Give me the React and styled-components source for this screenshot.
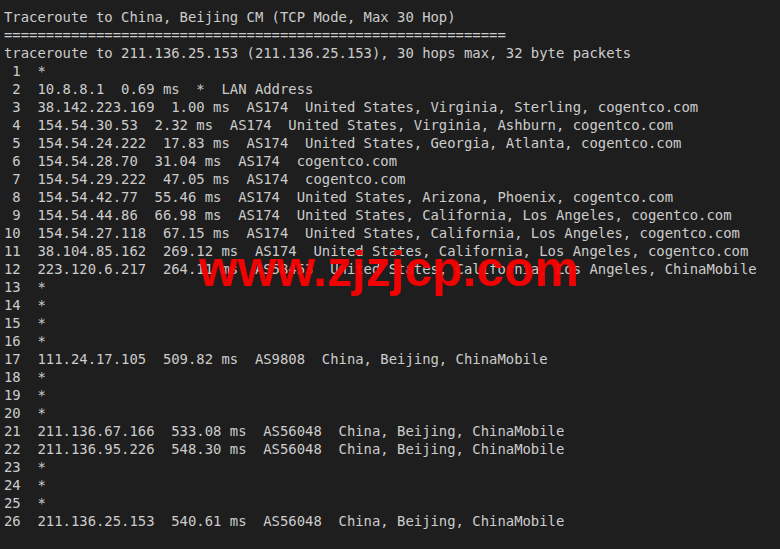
import React from "react";
import styled, { createGlobalStyle } from "styled-components";

const Global = createGlobalStyle`
  html, body { margin: 0; padding: 0; background: #1e1e1e; }
  body { width: 780px; height: 549px; overflow: hidden; }
`;

const Terminal = styled.div`
  position: relative;
  box-sizing: border-box;
  width: 780px;
  height: 549px;
  padding: 8px 4px 0 4px;
  background: #1e1e1e;
  color: #cccccc;
  font-family: "DejaVu Sans Mono", "Liberation Mono", monospace;
  font-size: 13.9px;
  line-height: 18px;
`;

const Line = styled.div`
  white-space: pre;
  height: 18px;
`;

const Watermark = styled.div`
  position: absolute;
  left: 199px;
  top: 245px;
  font-family: "Liberation Sans", Arial, sans-serif;
  font-weight: bold;
  font-size: 49.8px;
  line-height: 1;
  color: #ff0000;
  opacity: 0.93;
  white-space: nowrap;
`;

const hops = [
  "*",
  "10.8.8.1  0.69 ms  *  LAN Address",
  "38.142.223.169  1.00 ms  AS174  United States, Virginia, Sterling, cogentco.com",
  "154.54.30.53  2.32 ms  AS174  United States, Virginia, Ashburn, cogentco.com",
  "154.54.24.222  17.83 ms  AS174  United States, Georgia, Atlanta, cogentco.com",
  "154.54.28.70  31.04 ms  AS174  cogentco.com",
  "154.54.29.222  47.05 ms  AS174  cogentco.com",
  "154.54.42.77  55.46 ms  AS174  United States, Arizona, Phoenix, cogentco.com",
  "154.54.44.86  66.98 ms  AS174  United States, California, Los Angeles, cogentco.com",
  "154.54.27.118  67.15 ms  AS174  United States, California, Los Angeles, cogentco.com",
  "38.104.85.162  269.12 ms  AS174  United States, California, Los Angeles, cogentco.com",
  "223.120.6.217  264.11 ms  AS58453  United States, California, Los Angeles, ChinaMobile",
  "*",
  "*",
  "*",
  "*",
  "111.24.17.105  509.82 ms  AS9808  China, Beijing, ChinaMobile",
  "*",
  "*",
  "*",
  "211.136.67.166  533.08 ms  AS56048  China, Beijing, ChinaMobile",
  "211.136.95.226  548.30 ms  AS56048  China, Beijing, ChinaMobile",
  "*",
  "*",
  "*",
  "211.136.25.153  540.61 ms  AS56048  China, Beijing, ChinaMobile",
];

export default function App() {
  return (
    <>
      <Global />
      <Terminal>
        <Line>Traceroute to China, Beijing CM (TCP Mode, Max 30 Hop)</Line>
        <Line>{"=".repeat(60)}</Line>
        <Line>traceroute to 211.136.25.153 (211.136.25.153), 30 hops max, 32 byte packets</Line>
        {hops.map((h, i) => (
          <Line key={i}>{String(i + 1).padStart(2, " ") + "  " + h}</Line>
        ))}
        <Watermark>www.zjzjcp.com</Watermark>
      </Terminal>
    </>
  );
}
